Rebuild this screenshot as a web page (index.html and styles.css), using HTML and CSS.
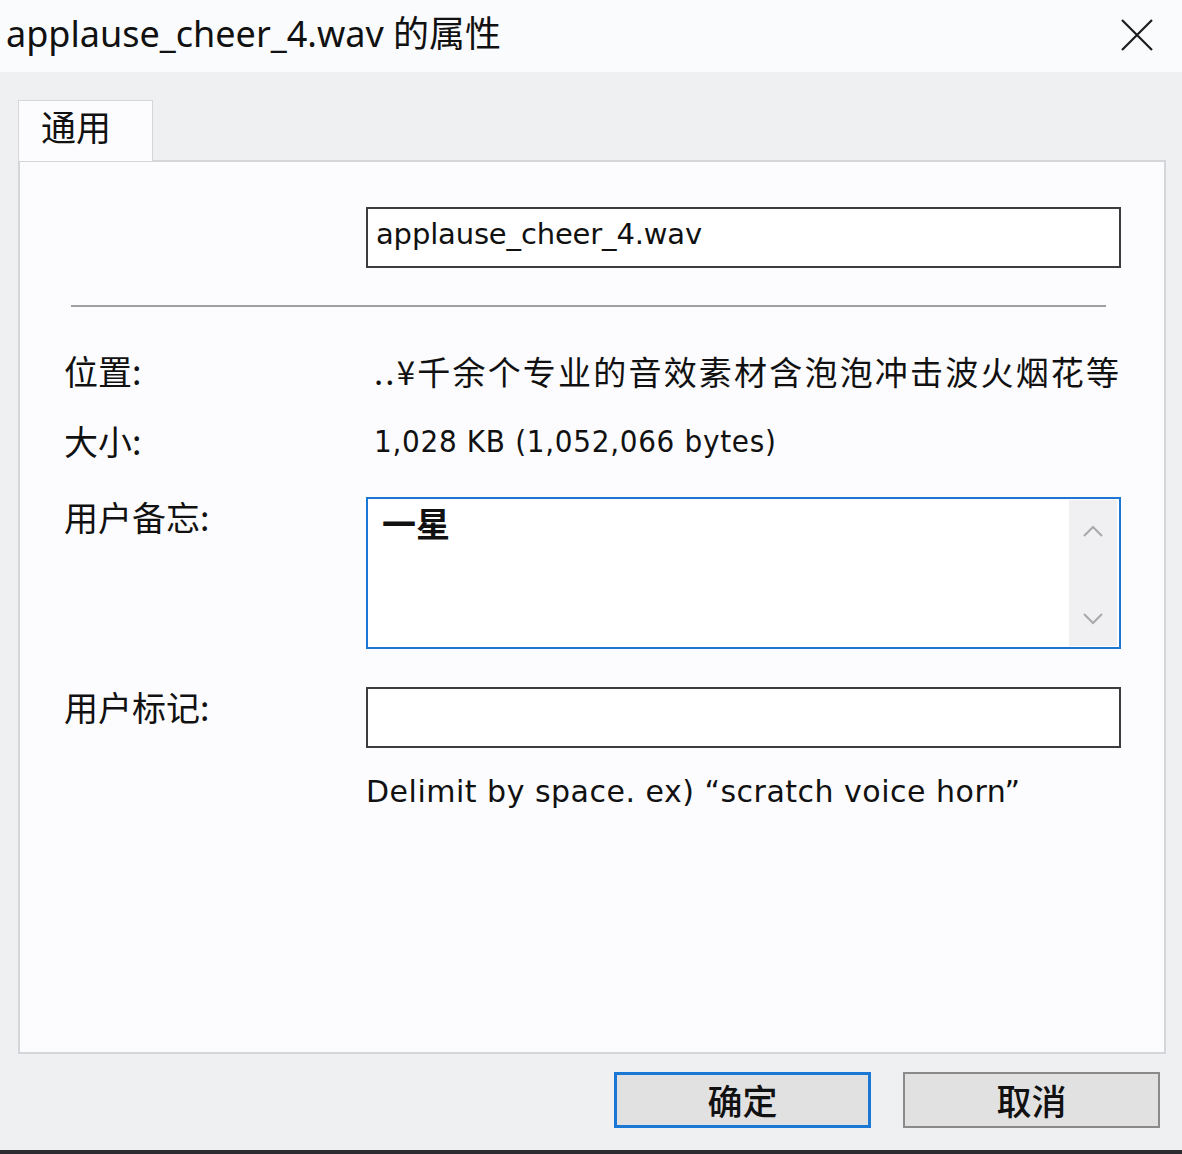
FILE: index.html
```html
<!DOCTYPE html>
<html lang="zh-CN">
<head>
    <meta charset="UTF-8">
    <title>applause_cheer_4.wav 的属性</title>
    <link rel="stylesheet" href="styles.css">
</head>
<body>
    <div class="dialog">
        <!-- Title bar -->
        <div class="title-bar">
            <span class="title-text">applause_cheer_4.wav 的属性</span>
            <svg class="close-icon" width="34" height="34" viewBox="0 0 34 34">
                <path d="M2 2 L32 32 M32 2 L2 32" stroke="#1c1c1c" stroke-width="2.2" fill="none"/>
            </svg>
        </div>

        <div class="dialog-body">
            <!-- Tabs -->
            <div class="tab-strip">
                <div class="tab tab-active">通用</div>
            </div>

            <!-- Tab page -->
            <div class="tab-page">
                <div class="form-row name-row">
                    <div class="label"></div>
                    <div class="text-box">applause_cheer_4.wav</div>
                </div>

                <div class="divider"></div>

                <div class="form-row info-row">
                    <div class="label">位置:</div>
                    <div class="value">..¥千余个专业的音效素材含泡泡冲击波火烟花等</div>
                </div>
                <div class="form-row info-row">
                    <div class="label">大小:</div>
                    <div class="value value-size">1,028 KB (1,052,066 bytes)</div>
                </div>

                <div class="form-row memo-row">
                    <div class="label">用户备忘:</div>
                    <div class="memo-box">
                        <div class="memo-text">一星</div>
                        <div class="scrollbar">
                            <svg width="22" height="14" viewBox="0 0 22 14">
                                <path d="M2 12 L11 3 L20 12" stroke="#a9a9a9" stroke-width="2" fill="none"/>
                            </svg>
                            <svg width="22" height="14" viewBox="0 0 22 14">
                                <path d="M2 2 L11 11 L20 2" stroke="#a9a9a9" stroke-width="2" fill="none"/>
                            </svg>
                        </div>
                    </div>
                </div>

                <div class="form-row tag-row">
                    <div class="label">用户标记:</div>
                    <div class="text-box"></div>
                </div>

                <div class="form-row hint-row">
                    <div class="label"></div>
                    <div class="hint">Delimit by space. ex) “scratch voice horn”</div>
                </div>
            </div>

            <!-- Buttons -->
            <div class="button-bar">
                <button class="dlg-btn btn-default">确定</button>
                <button class="dlg-btn">取消</button>
            </div>
        </div>
    </div>
</body>
</html>
```

FILE: styles.css
```css
:root {
    --title-bg: #fafbfd;
    --body-bg: #eff0f2;
    --panel-bg: #fcfcfe;
    --panel-border: #d4d6d9;
    --box-border: #3c3c40;
    --focus-blue: #1a78d4;
    --text-color: #111;
}

* {
    box-sizing: border-box;
    margin: 0;
    padding: 0;
}

body {
    font-family: "Noto Sans", "Noto Sans CJK SC", sans-serif;
    color: var(--text-color);
    background-color: var(--body-bg);
}

.dialog {
    width: 1182px;
    height: 1154px;
    display: flex;
    flex-direction: column;
    border-bottom: 4px solid #2b2b30;
}

.title-bar {
    height: 72px;
    background-color: var(--title-bg);
    display: flex;
    align-items: center;
    justify-content: space-between;
    padding: 0 28px 9px 6px;
}

.title-text {
    font-family: "Noto Sans", "Noto Sans CJK SC", sans-serif;
    font-size: 36px;
    color: #111;
    letter-spacing: 0;
}

.close-icon {
    margin-top: 7px;
}

.dialog-body {
    flex: 1;
    background-color: var(--body-bg);
    padding: 28px 16px 0 18px;
    display: flex;
    flex-direction: column;
}

.tab-strip {
    display: flex;
    height: 60px;
}

.tab {
    width: 135px;
    height: 61px;
    font-family: "Noto Sans CJK SC", sans-serif;
    font-size: 35px;
    padding: 0 0 0 22px;
    line-height: 50px;
}

.tab-active {
    background-color: var(--panel-bg);
    border: 1px solid var(--panel-border);
    border-bottom: none;
    position: relative;
    z-index: 1;
}

.tab-page {
    height: 894px;
    background-color: var(--panel-bg);
    border: 2px solid var(--panel-border);
    padding: 45px 43px 0 44px;
    font-family: "Noto Sans CJK SC", sans-serif;
    font-size: 33px;
}

.form-row {
    display: grid;
    grid-template-columns: 302px 755px;
}

.text-box {
    height: 61px;
    border: 2px solid var(--box-border);
    background-color: #fff;
    font-family: "DejaVu Sans", sans-serif;
    font-size: 29px;
    letter-spacing: -0.15px;
    padding: 0 0 0 8px;
    line-height: 50px;
}

.divider {
    height: 2px;
    background-color: #a0a0a4;
    margin: 37px 15px 0 7px;
}

.info-row {
    height: 70px;
    align-items: center;
}

.name-row + .divider + .info-row {
    margin-top: 29px;
}

.label {
    font-family: "Noto Sans CJK SC", sans-serif;
    font-size: 34px;
    line-height: 40px;
}

.value {
    padding-left: 8px;
    font-size: 33px;
    letter-spacing: 2.2px;
    white-space: nowrap;
}

.value-size {
    font-family: "DejaVu Sans Condensed", "DejaVu Sans", sans-serif;
    font-size: 31px;
    letter-spacing: 0.7px;
}

.memo-row {
    margin-top: 21px;
}

.memo-box {
    height: 152px;
    border: 2px solid var(--focus-blue);
    background-color: #fff;
    display: flex;
    justify-content: space-between;
}

.memo-text {
    font-family: "Noto Sans CJK SC", sans-serif;
    font-weight: 700;
    font-size: 34px;
    padding: 4px 0 0 14px;
    line-height: 40px;
}

.scrollbar {
    width: 48px;
    margin: 1px 2px 1px 0;
    background-color: #f0f0f2;
    display: flex;
    flex-direction: column;
    align-items: center;
    justify-content: space-between;
    padding: 24px 0 20px;
}

.tag-row {
    margin-top: 38px;
}

.hint-row {
    margin-top: 26px;
}

.hint {
    font-family: "DejaVu Sans", sans-serif;
    font-size: 30px;
    letter-spacing: 0.5px;
    white-space: nowrap;
}

.button-bar {
    display: flex;
    justify-content: flex-end;
    gap: 32px;
    padding: 18px 6px 0 0;
}

.dlg-btn {
    width: 257px;
    height: 56px;
    background-color: #e1e1e1;
    border: 2px solid #8a8a8a;
    font-family: "Noto Sans CJK SC", sans-serif;
    font-size: 35px;
    font-weight: 500;
    color: #111;
    line-height: 48px;
}

.btn-default {
    border: 3px solid var(--focus-blue);
}
```
